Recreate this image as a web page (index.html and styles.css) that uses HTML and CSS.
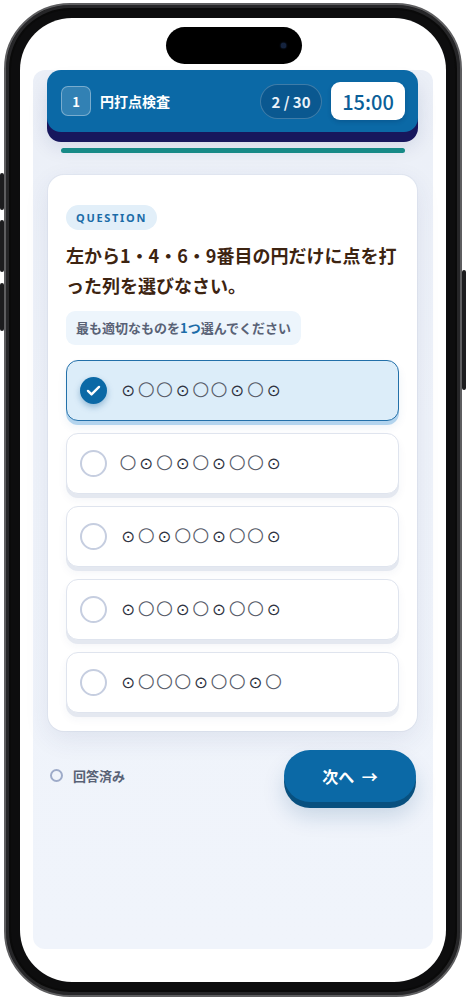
FILE: index.html
```html
<!DOCTYPE html>
<html lang="ja">
<head>
<meta charset="utf-8">
<title>円打点検査</title>
<link rel="stylesheet" href="styles.css">
</head>
<body>
<div class="phone">
  <span class="side-btn side-btn--mute"></span>
  <span class="side-btn side-btn--volup"></span>
  <span class="side-btn side-btn--voldown"></span>
  <span class="side-btn side-btn--power"></span>
  <div class="screen">
    <div class="island"><span class="camera"></span></div>
    <div class="app">
      <header class="topbar">
        <span class="section-no">1</span>
        <span class="section-title">円打点検査</span>
        <span class="counter">2 / 30</span>
        <span class="timer">15:00</span>
      </header>
      <div class="progress"></div>
      <main class="card">
        <span class="tag">QUESTION</span>
        <h1 class="question">左から1・4・6・9番目の円だけに点を打った列を選びなさい。</h1>
        <p class="hint">最も適切なものを<b>1つ</b>選んでください</p>
        <ul class="options">
          <li class="option option--selected">
            <span class="radio radio--checked"><svg viewBox="0 0 24 24" width="19" height="19"><path d="M5 12.5l4.5 4.5L19 7.5" fill="none" stroke="#fff" stroke-width="3" stroke-linecap="round" stroke-linejoin="round"/></svg></span>
            <span class="dots"><i class="d">⊙</i><i class="o">○</i><i class="o">○</i><i class="d">⊙</i><i class="o">○</i><i class="o">○</i><i class="d">⊙</i><i class="o">○</i><i class="d">⊙</i></span>
          </li>
          <li class="option">
            <span class="radio"></span>
            <span class="dots"><i class="o">○</i><i class="d">⊙</i><i class="o">○</i><i class="d">⊙</i><i class="o">○</i><i class="d">⊙</i><i class="o">○</i><i class="o">○</i><i class="d">⊙</i></span>
          </li>
          <li class="option">
            <span class="radio"></span>
            <span class="dots"><i class="d">⊙</i><i class="o">○</i><i class="d">⊙</i><i class="o">○</i><i class="o">○</i><i class="d">⊙</i><i class="o">○</i><i class="o">○</i><i class="d">⊙</i></span>
          </li>
          <li class="option">
            <span class="radio"></span>
            <span class="dots"><i class="d">⊙</i><i class="o">○</i><i class="o">○</i><i class="d">⊙</i><i class="o">○</i><i class="d">⊙</i><i class="o">○</i><i class="o">○</i><i class="d">⊙</i></span>
          </li>
          <li class="option">
            <span class="radio"></span>
            <span class="dots"><i class="d">⊙</i><i class="o">○</i><i class="o">○</i><i class="o">○</i><i class="d">⊙</i><i class="o">○</i><i class="o">○</i><i class="d">⊙</i><i class="o">○</i></span>
          </li>
        </ul>
      </main>
      <footer class="footer">
        <span class="status"><span class="status-ring"></span>回答済み</span>
        <button class="next">次へ →</button>
      </footer>
    </div>
  </div>
</div>
</body>
</html>
```
FILE: styles.css
```css
* { box-sizing: border-box; }
html, body { margin: 0; padding: 0; background: #ffffff; }
body {
  font-family: "Noto Sans CJK JP", "Noto Sans", sans-serif;
  width: 466px;
  height: 1000px;
  overflow: hidden;
}

.phone {
  position: relative;
  width: 458px;
  height: 994px;
  margin: 3px 0 0 4px;
  padding: 13px 14px;
  border: 2px solid #5e5e60;
  border-radius: 66px;
  background: #0d0d0e;
  box-shadow: inset 0 0 0 3px #262628, inset 0 0 0 5px #0a0a0a;
}

.side-btn {
  position: absolute;
  width: 4px;
  background: #1c1c1e;
  border-radius: 2px;
}
.side-btn--mute { left: -6px; top: 168px; height: 37px; }
.side-btn--volup { left: -6px; top: 215px; height: 52px; }
.side-btn--voldown { left: -6px; top: 278px; height: 48px; }
.side-btn--power { right: -6px; top: 265px; height: 120px; }

.screen {
  width: 426px;
  height: 964px;
  border-radius: 52px;
  background: #ffffff;
  display: flex;
  flex-direction: column;
  align-items: center;
  padding-top: 9px;
  overflow: hidden;
}

.island {
  width: 136px;
  height: 37px;
  border-radius: 19px;
  background: #000;
  margin-bottom: 6px;
  margin-left: 2px;
  display: flex;
  align-items: center;
  justify-content: flex-end;
  padding-right: 16px;
}
.camera {
  width: 5px;
  height: 5px;
  border-radius: 50%;
  background: #15233d;
  box-shadow: 0 0 2px #2a4c8a;
}

.app {
  width: 400px;
  height: 879px;
  border-radius: 12px;
  background: linear-gradient(#ebeff7, #eff3fa 40%, #f0f4fb);
  display: flex;
  flex-direction: column;
}

.topbar {
  margin: 0 15px 0 14px;
  height: 62px;
  border-radius: 14px;
  background: #0b69a6;
  box-shadow: 0 10px 0 #17175d, 0 14px 20px rgba(20, 30, 90, 0.12);
  display: flex;
  align-items: center;
  padding: 0 13px 0 14px;
  color: #fff;
}
.section-no {
  width: 30px;
  height: 30px;
  border-radius: 7px;
  background: rgba(255, 255, 255, 0.16);
  border: 1px solid rgba(255, 255, 255, 0.35);
  display: flex;
  align-items: center;
  justify-content: center;
  font-size: 13px;
  font-weight: 700;
}
.section-title {
  margin-left: 9px;
  font-size: 14px;
  font-weight: 700;
  flex: 1;
}
.counter {
  width: 62px;
  height: 35px;
  border-radius: 18px;
  background: #0a5890;
  border: 1px solid rgba(255, 255, 255, 0.22);
  display: flex;
  align-items: center;
  justify-content: center;
  font-size: 15px;
  font-weight: 700;
  color: #e9f2fa;
}
.timer {
  margin-left: 9px;
  width: 74px;
  height: 38px;
  border-radius: 9px;
  background: #fff;
  color: #0b5f98;
  display: flex;
  align-items: center;
  justify-content: center;
  font-size: 20px;
  font-weight: 500;
  box-shadow: 0 2px 4px rgba(0, 30, 70, 0.2);
}

.progress {
  margin: 16px 28px 0;
  height: 4.5px;
  border-radius: 3px;
  background: #178a87;
}

.card {
  margin: 22px 16px 0 15px;
  padding: 30px 18px 18px;
  background: #fff;
  border-radius: 16px;
  box-shadow: 0 8px 26px rgba(40, 60, 110, 0.09), 0 0 0 1px rgba(220, 226, 238, 0.5);
  display: flex;
  flex-direction: column;
  align-items: flex-start;
}
.tag {
  height: 25px;
  padding: 0 10px;
  border-radius: 13px;
  background: #e2eff9;
  color: #1b6ca8;
  font-family: "Noto Sans", "Noto Sans CJK JP", sans-serif;
  font-size: 11px;
  font-weight: 700;
  letter-spacing: 1.7px;
  display: flex;
  align-items: center;
}
.question {
  margin: 10px 0 0;
  font-size: 18px;
  line-height: 30px;
  font-weight: 700;
  color: #3d2411;
}
.hint {
  margin: 11px 0 0;
  height: 34px;
  padding: 0 10px;
  border-radius: 9px;
  background: #edf5fc;
  color: #596276;
  font-size: 13px;
  font-weight: 700;
  display: flex;
  align-items: center;
}
.hint b { color: #1b6ca8; font-weight: 700; }

.options {
  list-style: none;
  margin: 15px 0 0;
  padding: 0;
  width: 100%;
  display: flex;
  flex-direction: column;
  gap: 12px;
}
.option {
  height: 61px;
  border: 1px solid #dfe4ee;
  border-radius: 12px;
  background: #fff;
  box-shadow: 0 4px 0 #e4e8f0, 0 6px 10px rgba(40, 60, 110, 0.05);
  display: flex;
  align-items: center;
  padding-left: 13px;
}
.option--selected {
  background: #dcedf9;
  border: 1.5px solid #2370a9;
  box-shadow: 0 4px 0 #b3d4ee, 0 6px 10px rgba(20, 90, 150, 0.08);
}
.radio {
  width: 27px;
  height: 27px;
  flex: none;
  border-radius: 50%;
  border: 2.5px solid #c6cee0;
  background: #fff;
}
.radio--checked {
  border: none;
  background: #0b69a6;
  box-shadow: 0 3px 6px rgba(11, 90, 150, 0.35);
  display: flex;
  align-items: center;
  justify-content: center;
}
.dots {
  margin-left: 12px;
  display: flex;
  align-items: center;
  height: 24px;
}
.dots i {
  font-style: normal;
  width: 18.2px;
  text-align: center;
  line-height: 20px;
  font-family: "DejaVu Sans", sans-serif;
}
.dots .o {
  font-size: 19.5px;
  color: #585d6a;
  padding-bottom: 3px;
}
.dots .d {
  font-size: 16.5px;
  color: #2f3442;
  padding-top: 2px;
}

.footer {
  margin: 19px 17px 0;
  display: flex;
  align-items: center;
  justify-content: space-between;
}
.status {
  display: flex;
  align-items: center;
  gap: 10px;
  font-size: 13px;
  font-weight: 700;
  color: #596276;
}
.status-ring {
  width: 13px;
  height: 13px;
  border-radius: 50%;
  border: 2px solid #9eabc9;
}
.next {
  width: 132px;
  height: 52px;
  border: none;
  border-radius: 26px;
  background: #0b69a6;
  color: #fff;
  font-family: "Noto Sans CJK JP", sans-serif;
  font-size: 16px;
  font-weight: 700;
  word-spacing: 4px;
  box-shadow: 0 6px 0 #08507f, 0 14px 22px rgba(10, 70, 130, 0.18);
}
```
